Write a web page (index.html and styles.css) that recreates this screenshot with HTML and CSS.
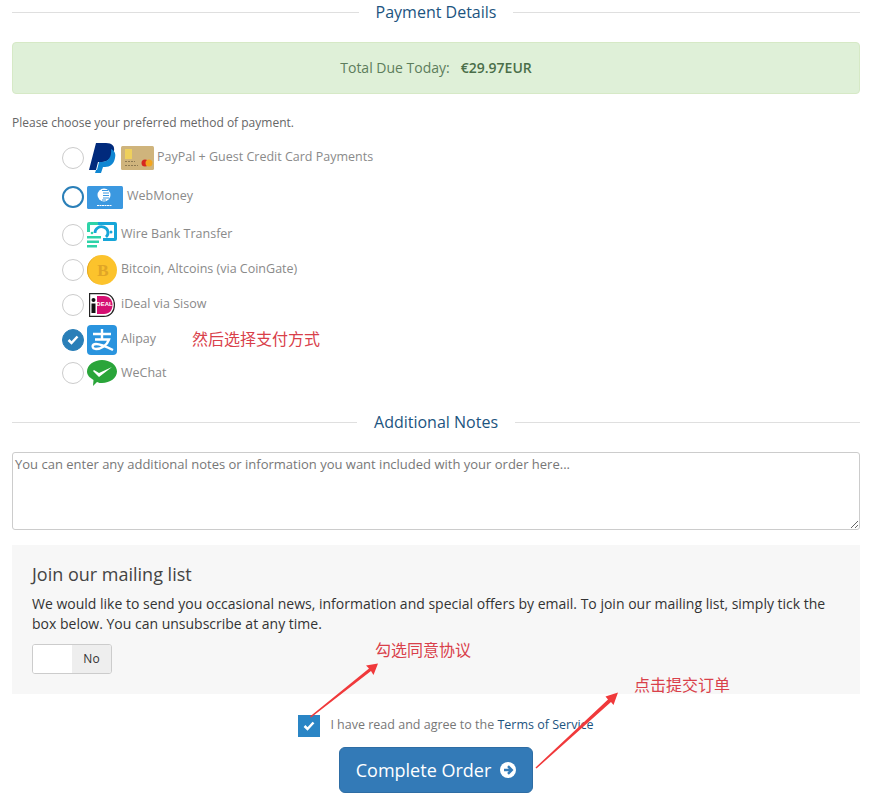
FILE: index.html
```html
<!DOCTYPE html>
<html lang="en">
<head>
<meta charset="utf-8">
<title>Payment Details</title>
<link rel="stylesheet" href="styles.css">
</head>
<body>
<main class="page">
  <div class="sub-heading sub-heading-first"><span>Payment Details</span></div>
  <div class="total-due">Total Due Today:<strong>€29.97EUR</strong></div>
  <p class="choose">Please choose your preferred method of payment.</p>

  <div class="methods">
    <label class="method m-paypal">
      <span class="radio"></span>
      <svg class="logo" width="27" height="30" viewBox="0 0 27 30"><path fill="#012a7c" d="M7 0h10c6 0 9 3 8 8-1 6-6 11-12 11H9L7 27H0z"/><path fill="#0f86d2" d="M22 6c4 2 5 5 4 9-1 6-5 9-10 9h-2l-2 6H6l1-3h1l2-8h3c6 0 10-5 9-13z"/></svg>
      <svg class="logo card" width="33" height="24" viewBox="0 0 33 24"><rect width="33" height="24" rx="1.500" fill="#cfb47c"/><rect x="4" y="3" width="7" height="10" fill="#eed05c"/><path fill="none" stroke="#8d7a52" d="M4 15.500h10M4 19.500h13" stroke-dasharray="2 1"/><circle cx="24" cy="17" r="3.500" fill="#d6261f"/><circle cx="28" cy="17" r="3.500" fill="#f2a51f"/></svg>
      <span class="name">PayPal + Guest Credit Card Payments</span>
    </label>
    <label class="method m-webmoney">
      <span class="radio radio-focus"></span>
      <svg class="logo" width="36" height="23" viewBox="0 0 36 23"><rect width="36" height="23" rx="1.500" fill="#3b98e0"/><circle cx="17" cy="9" r="6.500" fill="#fff"/><path fill="none" stroke="#3b98e0" stroke-width="1.100" d="M15 4.500h6M16 7h6M16 9.500h6M16 12h6M15 14h4"/><path fill="none" stroke="#fff" stroke-dasharray="2 .5" d="M10 19.500h15"/></svg>
      <span class="name">WebMoney</span>
    </label>
    <label class="method m-wire">
      <span class="radio"></span>
      <svg class="logo" width="30" height="26" viewBox="0 0 30 26"><path fill="#17a6d8" d="M10 0h18a2 2 0 0 1 2 2v15a2 2 0 0 1-2 2H16v-3h11V3H10z"/><path fill="#2ed3a8" d="M2 0h9v3H3v7H0V2a2 2 0 0 1 2-2zM0 14h14v2.500H0zM0 18.500h12V21H0zM0 23h10v2.500H0z"/><path fill="none" stroke="#17a6d8" stroke-width="2.800" d="M8 11a6.500 6 0 1 1 11 4"/><circle cx="24" cy="10" r="1.500" fill="#17a6d8"/><circle cx="5" cy="11" r="1.300" fill="#2ed3a8"/></svg>
      <span class="name">Wire Bank Transfer</span>
    </label>
    <label class="method m-bitcoin">
      <span class="radio"></span>
      <svg class="logo" width="30" height="30" viewBox="0 0 30 30"><circle cx="15" cy="15" r="15" fill="#fcc32c"/><path fill="#e6a923" d="M15 0a15 15 0 0 0 0 30 14 15 0 0 1 0-30z"/><text class="coin-b" x="16" y="21" text-anchor="middle">B</text></svg>
      <span class="name">Bitcoin, Altcoins (via CoinGate)</span>
    </label>
    <label class="method m-ideal">
      <span class="radio"></span>
      <svg class="logo logo-ideal" width="26" height="24" viewBox="0 0 26 24"><path fill="#fff" stroke="#222" stroke-width="1.200" d="M.6.6h14c7 0 10.800 5 10.800 11.400s-3.800 11.400-10.800 11.400H.6z"/><path fill="#d50f72" d="M8 3h7c5.500 0 8.500 4 8.500 9s-3 9-8.500 9H8z"/><circle cx="4.500" cy="7" r="2" fill="#111"/><rect x="2.500" y="10.500" width="4" height="9.500" fill="#111"/><text class="ideal-text" x="15.500" y="12.500" text-anchor="middle">DEAL</text></svg>
      <span class="name">iDeal via Sisow</span>
    </label>
    <label class="method m-alipay">
      <span class="radio radio-on"><svg width="12" height="10" viewBox="0 0 12 10"><path fill="none" stroke="#fff" stroke-width="2.500" d="M1.500 5l3 3 6-6.500"/></svg></span>
      <svg class="logo" width="30" height="30" viewBox="0 0 30 30"><rect width="30" height="30" rx="4" fill="#2a94de"/><path fill="none" stroke="#fff" stroke-width="2.400" d="M6 9h18M15 4v10M8 14.500h14c-2 6-8 9.500-13 9.500-4 0-5-5 0-5 5 0 11 3 17 6"/></svg>
      <span class="name">Alipay</span>
    </label>
    <label class="method m-wechat">
      <span class="radio"></span>
      <svg class="logo" width="30" height="26" viewBox="0 0 30 26"><path fill="#2aa53a" d="M15 0c8 0 15 5 15 11.500S23 23 15 23c-2 0-3 0-5-1l-4 4 .5-6C2.500 17.500 0 15 0 11.500 0 5 7 0 15 0z"/><path fill="#fff" d="M6 11l1-1 5 3L25 7 12 17z"/></svg>
      <span class="name">WeChat</span>
    </label>
  </div>

  <div class="sub-heading sub-heading-notes"><span>Additional Notes</span></div>
  <textarea class="notes" placeholder="You can enter any additional notes or information you want included with your order here..."></textarea>

  <section class="mailing">
    <h4>Join our mailing list</h4>
    <p>We would like to send you occasional news, information and special offers by email. To join our mailing list, simply tick the box below. You can unsubscribe at any time.</p>
    <div class="toggle"><span class="toggle-handle"></span><span class="toggle-off">No</span></div>
  </section>

  <div class="tos">
    <span class="check"><svg width="12" height="10" viewBox="0 0 12 10"><path fill="none" stroke="#fff" stroke-width="2.500" d="M1.500 5l3 3 6-6.500"/></svg></span>
    <span class="tos-text">I have read and agree to the <a href="#">Terms of Service</a></span>
  </div>
  <div class="actions">
    <button class="complete" type="button">Complete Order
      <svg width="16" height="16" viewBox="0 0 16 16"><circle cx="8" cy="8" r="8" fill="#fff"/><path fill="none" stroke="#337ab7" stroke-width="2.400" d="M4 8h7M8 4.200L11.800 8 8 11.800"/></svg>
    </button>
  </div>
</main>

<span class="note note-pay">然后选择支付方式</span>
<span class="note note-agree">勾选同意协议</span>
<span class="note note-submit">点击提交订单</span>
<svg class="arrows" width="873" height="808" viewBox="0 0 873 808">
  <path fill="#f0393b" d="M310 716.500L369 668.500 366 665.500 378 663.500 373.500 675 371 671 311 717.500zM535.500 767.500L608 699.500 605.500 696.500 618 692.500 613.500 705 611 702 536.500 768.500z"/>
</svg>
</body>
</html>
```
FILE: styles.css
```css
* { box-sizing: border-box; }
html, body { margin: 0; padding: 0; background: #fff; }
body {
  font-family: "Open Sans", sans-serif;
  font-size: 14px;
  color: #333;
  width: 873px;
  height: 808px;
  overflow: hidden;
  position: relative;
}
.page { padding: 0 13px 0 12px; }

.sub-heading {
  display: flex;
  align-items: center;
  gap: 17px;
  font-size: 16px;
  line-height: 22px;
  color: #1c5480;
}
.sub-heading::before, .sub-heading::after {
  content: "";
  flex: 1;
  border-top: 1px solid #dfdfdf;
}
.sub-heading-first { margin-top: 1px; }
.sub-heading-notes { margin-top: 23px; }

.total-due {
  margin-top: 19px;
  height: 52px;
  line-height: 50px;
  text-align: center;
  background: #dff0d8;
  border: 1px solid #d6e9c6;
  border-radius: 4px;
  color: #5d7d5c;
}
.total-due strong { margin-left: 11px; color: #4a6e49; font-weight: 600; }

.choose { margin: 20px 0 0; font-size: 12px; line-height: 17px; color: #666; }

.methods { margin-top: 8px; padding-left: 50px; }
.method { display: flex; align-items: center; font-size: 12.5px; color: #8a8a8a; }
.method .logo { flex: none; }
.m-paypal { height: 38px; }
.m-webmoney { height: 40px; }
.m-wire { height: 35px; }
.m-bitcoin { height: 36px; }
.m-ideal { height: 34px; }
.m-alipay { height: 36px; }
.m-wechat { height: 30px; }
.radio {
  flex: none;
  width: 22px;
  height: 22px;
  border-radius: 50%;
  border: 1px solid #ccc;
  background: #fff;
  display: flex;
  align-items: center;
  justify-content: center;
  margin-right: 3px;
}
.radio-focus { border: 2px solid #2a7fb8; }
.radio-on { background: #2a7fb8; border-color: #2a7fb8; }
.m-paypal .logo { margin-left: 2px; margin-right: 0; }
.m-paypal .logo.card { margin-left: 5px; margin-right: 3px; }
.m-webmoney .logo { margin-right: 4px; }
.m-wire .logo, .m-bitcoin .logo, .m-alipay .logo, .m-wechat .logo { margin-right: 4px; }
.m-ideal .logo-ideal { margin-left: 2px; margin-right: 6px; }
.name { line-height: 17px; margin-bottom: 4px; }
.m-webmoney .name { margin-bottom: 3px; }
.m-wire .name, .m-wechat .name { margin-bottom: 2px; }
.coin-b { font: 600 17px "Liberation Serif", serif; fill: #e0a526; }
.ideal-text { font: 700 6px "Liberation Sans", sans-serif; fill: #fff; }

.notes {
  display: block;
  width: 100%;
  height: 78px;
  margin-top: 19px;
  padding: 3px 2px;
  border: 1px solid #ccc;
  border-radius: 3px;
  font: 13px/17px "Open Sans", sans-serif;
  color: #333;
  background: #fff;
  resize: vertical;
}
.notes::placeholder { color: #777; opacity: 1; }

.mailing {
  margin-top: 15px;
  height: 149px;
  padding: 15px 20px;
  background: #f7f7f7;
}
.mailing h4 { margin: 0; font-size: 18px; line-height: 28px; font-weight: 400; color: #444; }
.mailing p { margin: 6px 0 0; line-height: 20px; color: #333; }
.toggle {
  display: flex;
  width: 80px;
  height: 30px;
  margin-top: 10px;
  background: #fff;
  border: 1px solid #ccc;
  border-radius: 3px;
  overflow: hidden;
}
.toggle-handle { width: 39px; background: #fff; }
.toggle-off { flex: 1; background: #eee; font-size: 12px; line-height: 28px; text-align: center; color: #333; }

.tos {
  display: flex;
  align-items: center;
  justify-content: center;
  gap: 10px;
  margin-top: 21px;
  padding-left: 20px;
  font-size: 12.5px;
  color: #777;
}
.tos-text { margin-bottom: 4px; }
.tos a { color: #1c5480; text-decoration: none; }
.check {
  width: 22px;
  height: 22px;
  background: #2a85c5;
  display: flex;
  align-items: center;
  justify-content: center;
}
.actions { display: flex; justify-content: center; margin-top: 10px; }
.complete {
  display: flex;
  align-items: center;
  gap: 9px;
  height: 46px;
  width: 194px;
  justify-content: center;
  padding: 0;
  font: 18px "Open Sans", sans-serif;
  color: #fff;
  background: #337ab7;
  border: 1px solid #2e6da4;
  border-radius: 6px;
}

.note {
  position: absolute;
  font-family: "Noto Sans CJK SC", sans-serif;
  font-size: 16px;
  line-height: 22px;
  color: #d9404a;
  white-space: nowrap;
}
.note-pay { left: 192px; top: 327px; }
.note-agree { left: 375px; top: 638px; }
.note-submit { left: 634px; top: 673px; }
.arrows { position: absolute; left: 0; top: 0; pointer-events: none; }
```
